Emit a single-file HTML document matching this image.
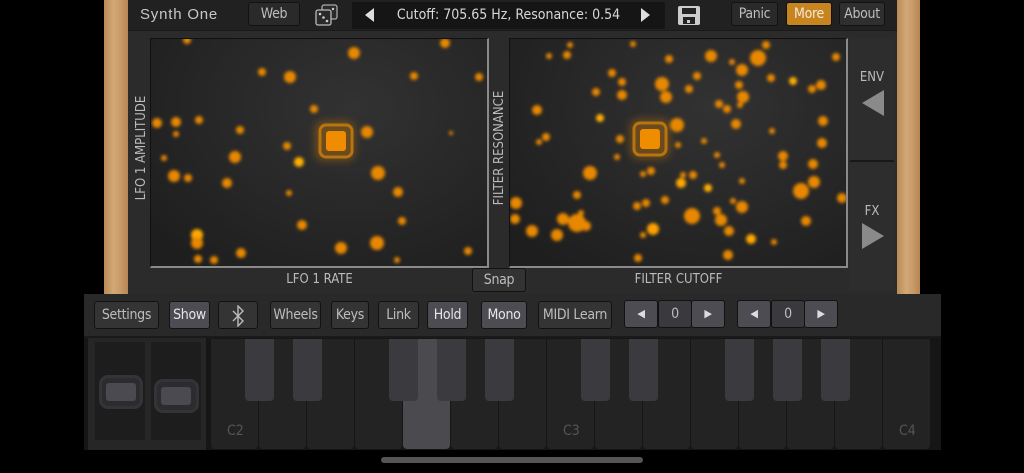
<!DOCTYPE html>
<html><head><meta charset="utf-8"><style>
*{box-sizing:border-box;margin:0;padding:0}
body{width:1024px;height:473px;background:#000;position:relative;overflow:hidden;font-family:"Liberation Sans",sans-serif}
.a{position:absolute}
.wood{background:linear-gradient(90deg,#b98a55,#d2a877 40%,#c89a66 70%,#b58654)}
.btn{position:absolute;background:#343434;border:1px solid #121212;border-radius:3px;color:#bdbdbd;font-size:14px;text-align:center;line-height:26px;font-family:"DejaVu Sans Condensed","Liberation Sans Narrow","Liberation Sans",sans-serif;letter-spacing:-0.3px}
.hl{background:#4c4c52;color:#e6e6e6}
.tb{top:2px;height:24px;line-height:22px}
.pad{position:absolute;background:radial-gradient(ellipse at 60% 30%,#323232,#1e1e1e 90%);border-right:2px solid #8a8a8a;border-bottom:2px solid #8a8a8a;border-top:1px solid #111;border-left:1px solid #111}
.lbl{position:absolute;color:#bbb;font-size:13px;font-family:"DejaVu Sans Condensed","Liberation Sans",sans-serif}
.wk{position:absolute;top:339px;width:47px;height:110px;background:#232323;border-radius:0 0 4px 4px}
.bk{position:absolute;top:339px;width:29px;height:62px;background:#3a3a3f;border-radius:0 0 4px 4px}
.kl{position:absolute;top:423px;color:#555;font-size:14px;font-family:"DejaVu Sans Condensed",sans-serif}
</style></head><body>
<div class="a wood" style="left:104px;top:0;width:24px;height:294px"></div>
<div class="a wood" style="left:897px;top:0;width:23px;height:294px"></div>
<div class="a" style="left:128px;top:0;width:769px;height:294px;background:#2b2b2b"></div>
<div class="a" style="left:128px;top:0;width:769px;height:31px;background:#212121;border-bottom:1px solid #1a1a1a"></div>
<div class="a" style="left:140px;top:6px;color:#c8c8c8;font-size:15px;letter-spacing:0.8px">Synth One</div>
<div class="btn tb" style="left:248px;width:52px;background:#2a2a2a">Web</div>
<svg class="a" style="left:315px;top:4px" width="24" height="22" viewBox="0 0 24 22"><rect x="7" y="1" width="15" height="14" rx="2" fill="#2a2a2a" stroke="#aaa" stroke-width="1.3"/><rect x="1" y="6" width="15" height="15" rx="2" fill="#2a2a2a" stroke="#bbb" stroke-width="1.3"/><circle cx="5" cy="10" r="1.3" fill="#ccc"/><circle cx="12" cy="17" r="1.3" fill="#ccc"/><circle cx="8.5" cy="13.5" r="1.3" fill="#ccc"/><circle cx="18" cy="5" r="1.2" fill="#ccc"/></svg>
<div class="a" style="left:352px;top:2px;width:313px;height:27px;background:#151515;border-radius:2px"></div>
<svg class="a" style="left:363px;top:7px" width="12" height="16"><path d="M11 1L2 8L11 15Z" fill="#ddd"/></svg>
<svg class="a" style="left:640px;top:7px" width="12" height="16"><path d="M1 1L10 8L1 15Z" fill="#ddd"/></svg>
<div class="a" style="left:352px;top:7px;width:313px;text-align:center;color:#d8d8d8;font-size:14px;font-family:'DejaVu Sans Condensed','Liberation Sans',sans-serif">Cutoff: 705.65 Hz, Resonance: 0.54</div>
<svg class="a" style="left:677px;top:5px" width="24" height="21"><rect x="1" y="1" width="22" height="19" rx="2" fill="#ccc"/><rect x="5" y="3" width="14" height="6" fill="#222"/><rect x="6" y="12" width="12" height="7" fill="#222"/><rect x="10" y="15" width="3" height="3" fill="#ccc"/></svg>
<div class="btn tb" style="left:731px;width:47px;background:#2a2a2a">Panic</div>
<div class="btn tb" style="left:786px;width:46px;background:#c8841e;color:#f4e9d8">More</div>
<div class="btn tb" style="left:839px;width:46px;background:#2f2f2f">About</div>

<div class="pad" style="left:150px;top:38px;width:339px;height:230px"></div>
<div class="pad" style="left:509px;top:38px;width:339px;height:230px"></div>
<div class="lbl" style="left:134px;top:223px;transform-origin:0 0;transform:rotate(-90deg);width:150px;text-align:center">LFO 1 AMPLITUDE</div>
<div class="lbl" style="left:492px;top:223px;transform-origin:0 0;transform:rotate(-90deg);width:150px;text-align:center">FILTER RESONANCE</div>
<div class="lbl" style="left:150px;top:272px;width:339px;text-align:center">LFO 1 RATE</div>
<div class="lbl" style="left:509px;top:272px;width:339px;text-align:center">FILTER CUTOFF</div>
<div class="btn" style="left:472px;top:268px;width:54px;height:24px;line-height:22px;background:#333">Snap</div>
<div class="a" style="left:850px;top:38px;width:44px;height:253px;background:#2d2d2d"></div>
<div class="a" style="left:850px;top:160px;width:44px;height:2px;background:#181818"></div>
<div class="lbl" style="left:850px;top:70px;width:44px;text-align:center">ENV</div>
<svg class="a" style="left:861px;top:89px" width="24" height="28"><path d="M23 1L1 14L23 27Z" fill="#8a8a8a"/></svg>
<div class="lbl" style="left:850px;top:204px;width:44px;text-align:center">FX</div>
<svg class="a" style="left:861px;top:222px" width="24" height="28"><path d="M1 1L23 14L1 27Z" fill="#8a8a8a"/></svg>

<svg class="a" style="left:0;top:0" width="1024" height="300">
<defs><filter id="b" x="-1" y="-1" width="3" height="3"><feGaussianBlur stdDeviation="1.6"/></filter>
<filter id="b2" x="-1" y="-1" width="3" height="3"><feGaussianBlur stdDeviation="4"/></filter>
<clipPath id="c1"><rect x="151" y="39" width="336" height="227"/></clipPath>
<clipPath id="c2"><rect x="510" y="39" width="336" height="227"/></clipPath></defs>
<g clip-path="url(#c1)" fill="#e88800" filter="url(#b)">
<circle cx="187" cy="40" r="4"/><circle cx="354" cy="53" r="6"/><circle cx="445" cy="43" r="5"/><circle cx="262" cy="72" r="4"/><circle cx="290" cy="77" r="6"/><circle cx="414" cy="76" r="4"/><circle cx="479" cy="77" r="4"/><circle cx="314" cy="109" r="4"/><circle cx="157" cy="123" r="5"/><circle cx="176" cy="122" r="5"/><circle cx="199" cy="120" r="4"/><circle cx="176" cy="134" r="3"/><circle cx="240" cy="130" r="4"/><circle cx="367" cy="132" r="6"/><circle cx="451" cy="133" r="2"/><circle cx="287" cy="146" r="4"/><circle cx="164" cy="158" r="3"/><circle cx="235" cy="157" r="6"/><circle cx="299" cy="162" r="5" fill="#ffb000"/><circle cx="174" cy="176" r="6"/><circle cx="188" cy="178" r="4"/><circle cx="227" cy="183" r="5"/><circle cx="378" cy="173" r="7"/><circle cx="289" cy="193" r="3"/><circle cx="398" cy="192" r="5"/><circle cx="302" cy="225" r="5"/><circle cx="402" cy="221" r="4"/><circle cx="197" cy="235" r="6" fill="#ffa800"/><circle cx="197" cy="243" r="6"/><circle cx="241" cy="253" r="5"/><circle cx="341" cy="248" r="6"/><circle cx="377" cy="243" r="7"/><circle cx="468" cy="251" r="4"/><circle cx="198" cy="259" r="4"/><circle cx="214" cy="260" r="4"/><circle cx="397" cy="260" r="3"/>
</g>
<g clip-path="url(#c2)" fill="#e88800" filter="url(#b)">
<circle cx="570" cy="45" r="3"/><circle cx="633" cy="44" r="3"/><circle cx="549" cy="56" r="3"/><circle cx="567" cy="55" r="4"/><circle cx="669" cy="59" r="4"/><circle cx="711" cy="56" r="6"/><circle cx="758" cy="58" r="8"/><circle cx="766" cy="45" r="4"/><circle cx="836" cy="57" r="4"/><circle cx="732" cy="62" r="3"/><circle cx="612" cy="73" r="4"/><circle cx="742" cy="70" r="6"/><circle cx="697" cy="76" r="4"/><circle cx="771" cy="78" r="4"/><circle cx="622" cy="82" r="4"/><circle cx="662" cy="84" r="7"/><circle cx="793" cy="81" r="4" fill="#ffb000"/><circle cx="739" cy="85" r="4"/><circle cx="821" cy="85" r="5"/><circle cx="812" cy="89" r="4"/><circle cx="689" cy="89" r="4"/><circle cx="596" cy="92" r="4"/><circle cx="622" cy="95" r="5"/><circle cx="666" cy="97" r="6"/><circle cx="743" cy="97" r="6"/><circle cx="537" cy="110" r="5"/><circle cx="719" cy="104" r="4"/><circle cx="727" cy="109" r="4"/><circle cx="740" cy="105" r="3"/><circle cx="600" cy="118" r="4" fill="#ffb000"/><circle cx="823" cy="121" r="5"/><circle cx="677" cy="125" r="7"/><circle cx="736" cy="124" r="5"/><circle cx="772" cy="131" r="3"/><circle cx="546" cy="137" r="4"/><circle cx="539" cy="142" r="3"/><circle cx="620" cy="139" r="4"/><circle cx="704" cy="141" r="3"/><circle cx="822" cy="143" r="5"/><circle cx="678" cy="145" r="3"/><circle cx="717" cy="155" r="3"/><circle cx="617" cy="157" r="3"/><circle cx="783" cy="156" r="5"/><circle cx="722" cy="165" r="3"/><circle cx="783" cy="165" r="4"/><circle cx="813" cy="164" r="5"/><circle cx="590" cy="173" r="7"/><circle cx="651" cy="171" r="4"/><circle cx="643" cy="174" r="3"/><circle cx="693" cy="175" r="4"/><circle cx="683" cy="175" r="3"/><circle cx="681" cy="183" r="5" fill="#ffa800"/><circle cx="742" cy="181" r="3"/><circle cx="814" cy="182" r="6"/><circle cx="801" cy="191" r="8"/><circle cx="708" cy="188" r="4" fill="#ffb000"/><circle cx="577" cy="195" r="4"/><circle cx="665" cy="200" r="4"/><circle cx="646" cy="203" r="4"/><circle cx="637" cy="206" r="4"/><circle cx="733" cy="201" r="3"/><circle cx="842" cy="198" r="5"/><circle cx="516" cy="203" r="6"/><circle cx="742" cy="207" r="6"/><circle cx="717" cy="211" r="4"/><circle cx="581" cy="213" r="3"/><circle cx="692" cy="216" r="8"/><circle cx="515" cy="219" r="5"/><circle cx="563" cy="219" r="6"/><circle cx="577" cy="223" r="9"/><circle cx="586" cy="226" r="5"/><circle cx="721" cy="220" r="6"/><circle cx="806" cy="221" r="5"/><circle cx="532" cy="231" r="6"/><circle cx="557" cy="235" r="6"/><circle cx="653" cy="229" r="6" fill="#ffa000"/><circle cx="729" cy="231" r="5"/><circle cx="643" cy="235" r="3"/><circle cx="751" cy="239" r="5" fill="#ffa800"/><circle cx="774" cy="242" r="3"/><circle cx="728" cy="255" r="5"/><circle cx="638" cy="258" r="4"/>
</g>
<rect x="315" y="121" width="40" height="40" rx="8" fill="#e08400" opacity="0.35" filter="url(#b2)"/>
<rect x="320" y="125" width="32" height="32" rx="6" fill="none" stroke="#b8740f" stroke-width="3"/>
<rect x="326" y="131" width="20" height="20" rx="3" fill="#f08c00"/>
<rect x="630" y="119" width="40" height="40" rx="8" fill="#e08400" opacity="0.35" filter="url(#b2)"/>
<rect x="634" y="123" width="32" height="32" rx="6" fill="none" stroke="#b8740f" stroke-width="3"/>
<rect x="640" y="129" width="20" height="20" rx="3" fill="#f08c00"/>
</svg>

<div class="a" style="left:84px;top:294px;width:857px;height:44px;background:#292929;border-bottom:2px solid #1a1a1a"></div>
<div class="btn" style="left:94px;top:301px;width:65px;height:28px">Settings</div>
<div class="btn hl" style="left:169px;top:301px;width:41px;height:28px">Show</div>
<div class="btn" style="left:218px;top:301px;width:40px;height:28px"><svg width="14" height="22" style="margin-top:3px" viewBox="0 0 14 22"><path d="M2 6L12 16L7 21V1L12 6L2 16" fill="none" stroke="#bbb" stroke-width="1.4"/></svg></div>
<div class="btn" style="left:270px;top:301px;width:51px;height:28px">Wheels</div>
<div class="btn" style="left:331px;top:301px;width:38px;height:28px">Keys</div>
<div class="btn" style="left:378px;top:301px;width:41px;height:28px">Link</div>
<div class="btn hl" style="left:427px;top:301px;width:41px;height:28px">Hold</div>
<div class="btn hl" style="left:481px;top:301px;width:46px;height:28px">Mono</div>
<div class="btn" style="left:538px;top:301px;width:74px;height:28px">MIDI Learn</div>
<div class="btn hl" style="left:624px;top:300px;width:34px;height:28px;color:#ddd;font-size:11px">◀</div>
<div class="btn" style="left:658px;top:300px;width:34px;height:28px;background:#3a3a3e">0</div>
<div class="btn hl" style="left:691px;top:300px;width:34px;height:28px;color:#ddd;font-size:11px">▶</div>
<div class="btn hl" style="left:737px;top:300px;width:34px;height:28px;color:#ddd;font-size:11px">◀</div>
<div class="btn" style="left:771px;top:300px;width:34px;height:28px;background:#3a3a3e">0</div>
<div class="btn hl" style="left:804px;top:300px;width:34px;height:28px;color:#ddd;font-size:11px">▶</div>

<div class="a" style="left:84px;top:338px;width:857px;height:112px;background:#161616"></div>
<div class="a" style="left:88px;top:338px;width:118px;height:112px;background:#262626"></div>
<div class="a" style="left:95px;top:342px;width:50px;height:98px;background:#1d1d1d"></div>
<div class="a" style="left:151px;top:342px;width:50px;height:98px;background:#1d1d1d"></div>
<div class="a" style="left:99px;top:375px;width:44px;height:34px;border-radius:9px;background:#2c2c2e;border:3px solid #343438"></div>
<div class="a" style="left:106px;top:383px;width:30px;height:18px;border-radius:3px;background:#4a4a50"></div>
<div class="a" style="left:154px;top:379px;width:45px;height:34px;border-radius:9px;background:#2c2c2e;border:3px solid #343438"></div>
<div class="a" style="left:161px;top:387px;width:30px;height:18px;border-radius:3px;background:#4a4a50"></div>

<div class="wk" style="left:211px"></div><div class="wk" style="left:259px"></div><div class="wk" style="left:307px"></div><div class="wk" style="left:355px"></div><div class="wk" style="left:403px;background:#4a4a4f"></div><div class="wk" style="left:451px"></div><div class="wk" style="left:499px"></div><div class="wk" style="left:547px"></div><div class="wk" style="left:595px"></div><div class="wk" style="left:643px"></div><div class="wk" style="left:691px"></div><div class="wk" style="left:739px"></div><div class="wk" style="left:787px"></div><div class="wk" style="left:835px"></div><div class="wk" style="left:883px"></div>
<div class="bk" style="left:245px"></div><div class="bk" style="left:293px"></div><div class="bk" style="left:389px"></div><div class="bk" style="left:437px"></div><div class="bk" style="left:485px"></div><div class="bk" style="left:581px"></div><div class="bk" style="left:629px"></div><div class="bk" style="left:725px"></div><div class="bk" style="left:773px"></div><div class="bk" style="left:821px"></div>
<div class="kl" style="left:227px">C2</div><div class="kl" style="left:563px">C3</div><div class="kl" style="left:899px">C4</div>
<div class="a" style="left:381px;top:457px;width:262px;height:6px;border-radius:3px;background:#555"></div>
</body></html>
